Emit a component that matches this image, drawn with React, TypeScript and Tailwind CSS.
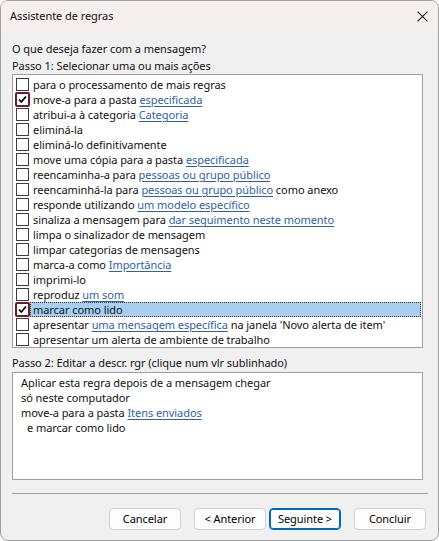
import React from "react";

type Part = { t: string; link?: boolean };

const actions: { parts: Part[]; checked?: boolean; selected?: boolean }[] = [
  { parts: [{ t: "para o processamento de mais regras" }] },
  { parts: [{ t: "move-a para a pasta " }, { t: "especificada", link: true }], checked: true },
  { parts: [{ t: "atribui-a à categoria " }, { t: "Categoria", link: true }] },
  { parts: [{ t: "eliminá-la" }] },
  { parts: [{ t: "eliminá-lo definitivamente" }] },
  { parts: [{ t: "move uma cópia para a pasta " }, { t: "especificada", link: true }] },
  { parts: [{ t: "reencaminha-a para " }, { t: "pessoas ou grupo público", link: true }] },
  { parts: [{ t: "reencaminhá-la para " }, { t: "pessoas ou grupo público", link: true }, { t: " como anexo" }] },
  { parts: [{ t: "responde utilizando " }, { t: "um modelo específico", link: true }] },
  { parts: [{ t: "sinaliza a mensagem para " }, { t: "dar seguimento neste momento", link: true }] },
  { parts: [{ t: "limpa o sinalizador de mensagem" }] },
  { parts: [{ t: "limpar categorias de mensagens" }] },
  { parts: [{ t: "marca-a como " }, { t: "Importância", link: true }] },
  { parts: [{ t: "imprimi-lo" }] },
  { parts: [{ t: "reproduz " }, { t: "um som", link: true }] },
  { parts: [{ t: "marcar como lido" }], checked: true, selected: true },
  { parts: [{ t: "apresentar " }, { t: "uma mensagem específica", link: true }, { t: " na janela 'Novo alerta de item'" }] },
  { parts: [{ t: "apresentar um alerta de ambiente de trabalho" }] },
];

function Link({ children }: { children: React.ReactNode }) {
  return <span className="text-[#2f62a3] underline underline-offset-[2px] decoration-[#2f62a3]">{children}</span>;
}

function Checkbox({ checked }: { checked?: boolean }) {
  return (
    <span className="relative ml-[3px] w-[13px] h-[13px] shrink-0 bg-white border border-[#3c3c3c]">
      {checked && (
        <>
          <span className="absolute -inset-[2px] border-2 border-[#6e1c2a] rounded-[2px]" />
          <svg viewBox="0 0 11 11" className="absolute inset-0 w-[11px] h-[11px]">
            <path d="M2 5.5 L4.3 8 L9 2.5" fill="none" stroke="#000" strokeWidth="1.8" />
          </svg>
        </>
      )}
    </span>
  );
}

function Button({ label, focused }: { label: string; focused?: boolean }) {
  return (
    <button
      className={
        "w-[72px] h-[22px] rounded-[4px] bg-[#fdfdfd] text-[11px] leading-[20px] text-black " +
        (focused ? "border border-[#0067c0] shadow-[inset_0_0_0_1px_#0067c0]" : "border border-[#d0d0d0]")
      }
    >
      {label}
    </button>
  );
}

export default function App() {
  return (
    <div className="w-[439px] h-[541px] bg-[#f0f0f0] border border-[#a0a0a0] rounded-[8px] overflow-hidden flex flex-col text-[11px] tracking-[-0.06px] text-[#111] font-['Noto_Sans',sans-serif]">
      {/* Title bar */}
      <div className="h-[30px] shrink-0 bg-[#f7efee] flex items-center justify-between pl-[9px] pr-[8px]">
        <span className="leading-[16px]">Assistente de regras</span>
        <svg viewBox="0 0 10 10" className="w-[11px] h-[11px] mr-[2px]">
          <path d="M0.5 0.5 L9.5 9.5 M9.5 0.5 L0.5 9.5" stroke="#1a1a1a" strokeWidth="1" />
        </svg>
      </div>

      <div className="flex flex-col px-[11px]">
        <div className="mt-[9px] h-[17px] leading-[17px]">O que deseja fazer com a mensagem?</div>
        <div className="h-[17px] leading-[17px]">Passo 1: Selecionar uma ou mais ações</div>

        {/* Actions list */}
        <div className="w-[411px] bg-white border border-[#a0a0a0] pt-[2px] h-[274px]">
          {actions.map((a, i) => (
            <div key={i} className="h-[15px] flex items-center">
              <Checkbox checked={a.checked} />
              <div
                className={
                  "flex-1 h-[15px] leading-[15px] whitespace-nowrap pl-[3px] ml-[1px] mr-[1px] " +
                  (a.selected ? "bg-[#a8cff0] outline outline-1 outline-dotted outline-[#333] -outline-offset-1" : "")
                }
              >
                {a.parts.map((p, j) => (p.link ? <Link key={j}>{p.t}</Link> : <span key={j}>{p.t}</span>))}
              </div>
            </div>
          ))}
        </div>

        <div className="mt-[6px] h-[17px] leading-[17px]">Passo 2: Editar a descr. rgr (clique num vlr sublinhado)</div>

        {/* Description */}
        <div className="w-[411px] h-[108px] mt-[1px] bg-white border border-[#a0a0a0] pt-[2px] px-[8px] leading-[15px]">
          <div>Aplicar esta regra depois de a mensagem chegar</div>
          <div>só neste computador</div>
          <div>
            move-a para a pasta <Link>Itens enviados</Link>
          </div>
          <div className="pl-[6px]">e marcar como lido</div>
        </div>

        <div className="mt-[13px] h-px w-[416px] bg-[#a0a0a0]" />

        <div className="mt-[14px] flex justify-end pr-[1px]">
          <Button label="Cancelar" />
          <div className="w-[13px]" />
          <Button label="< Anterior" />
          <div className="w-[3px]" />
          <Button label="Seguinte >" focused />
          <div className="w-[13px]" />
          <Button label="Concluir" />
        </div>
      </div>
    </div>
  );
}
